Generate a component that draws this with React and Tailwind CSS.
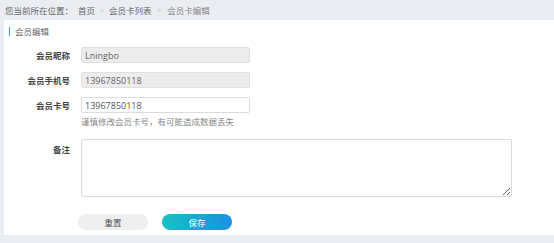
export default function App() {
  const font = { fontFamily: '"Noto Sans CJK SC", "Noto Sans", sans-serif' };
  const latin = { fontFamily: '"Open Sans", "Noto Sans CJK SC", sans-serif' };
  return (
    <div className="w-[554px] h-[243px] bg-[#eaedf2] overflow-hidden text-[8.5px]" style={font}>
      <div className="h-[20px] flex items-center pl-[5px] text-[#666] leading-none">
        <span>您当前所在位置：</span>
        <span className="ml-[5px]">首页</span>
        <span className="mx-[5px] text-[#c4c4c4] text-[7px]">&gt;</span>
        <span>会员卡列表</span>
        <span className="mx-[6px] text-[#c4c4c4] text-[7px]">&gt;</span>
        <span className="text-[#888]">会员卡编辑</span>
      </div>
      <div className="ml-[4px] bg-white h-[215px] flex flex-col">
        <div className="mt-[6px] h-[10px] flex items-center">
          <span className="ml-[5px] w-[1px] h-[9px] bg-[#3aa0e6]"></span>
          <span className="ml-[5px] text-[#666] leading-none">会员编辑</span>
        </div>
        <div className="mt-[11px] flex items-center h-[16px]">
          <div className="w-[66px] text-right font-bold text-[#444] leading-none">会员昵称</div>
          <div className="ml-[11px] w-[169px] h-[16px] bg-[#ececec] border border-[#e0e0e0] rounded-[2px] flex items-center px-[3px] text-[#666] text-[9px] leading-none" style={latin}>Lningbo</div>
        </div>
        <div className="mt-[9px] flex items-center h-[16px]">
          <div className="w-[66px] text-right font-bold text-[#444] leading-none">会员手机号</div>
          <div className="ml-[11px] w-[169px] h-[16px] bg-[#ececec] border border-[#e0e0e0] rounded-[2px] flex items-center px-[3px] text-[#666] text-[9px] leading-none" style={latin}>13967850118</div>
        </div>
        <div className="mt-[9px] flex items-center h-[16px]">
          <div className="w-[66px] text-right font-bold text-[#444] leading-none">会员卡号</div>
          <div className="ml-[11px] w-[169px] h-[16px] bg-white border border-[#dcdcdc] rounded-[2px] flex items-center px-[3px] text-[#555] text-[9px] leading-none" style={latin}>13967850118</div>
        </div>
        <div className="ml-[77px] mt-[3px] h-[10px] flex items-center text-[#888] leading-none">谨慎修改会员卡号，有可能造成数据丢失</div>
        <div className="mt-[13px] flex items-start">
          <div className="w-[66px] text-right font-bold text-[#444] leading-none mt-[6px]">备注</div>
          <textarea className="ml-[11px] w-[431px] h-[58px] border border-[#dcdcdc] rounded-[2px] outline-none resize-y bg-white"></textarea>
        </div>
        <div className="mt-[17px] flex items-center">
          <button className="ml-[74px] w-[70px] h-[16px] rounded-full bg-[#efefef] text-[#555] text-[8.5px] leading-none flex items-center justify-center">重置</button>
          <button className="ml-[14px] w-[70px] h-[16px] rounded-full bg-gradient-to-r from-[#1cc0c2] to-[#1d8fe2] text-white text-[8.5px] leading-none flex items-center justify-center">保存</button>
        </div>
      </div>
    </div>
  );
}
